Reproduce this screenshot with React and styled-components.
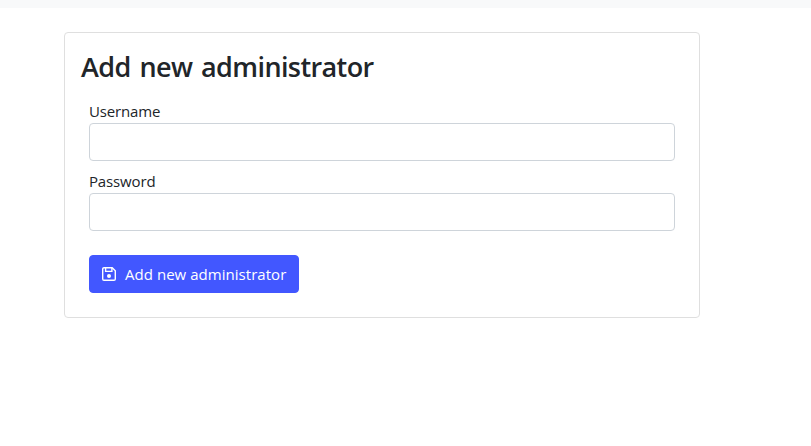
import React from "react";
import styled, { createGlobalStyle } from "styled-components";

const GlobalStyle = createGlobalStyle`
  *, *::before, *::after { box-sizing: border-box; }
  body {
    margin: 0;
    background: #fff;
    color: #212529;
    font-family: "Segoe UI", "Open Sans", "Noto Sans", sans-serif;
    font-size: 15px;
    line-height: 24px;
  }
`;

const Navbar = styled.header`
  height: 8px;
  background: #f8f9fa;
`;

const Card = styled.main`
  width: 636px;
  height: 286px;
  margin: 24px 0 0 64px;
  padding: 17px 16px 16px;
  border: 1px solid #dfdfdf;
  border-radius: 4px;
`;

const Title = styled.h1`
  margin: 0 0 7px;
  font-size: 27px;
  font-weight: 550;
  line-height: 34px;
  letter-spacing: -0.6px;
  word-spacing: 2.3px;
  white-space: nowrap;
`;

const Form = styled.form`
  display: flex;
  flex-direction: column;
  align-items: flex-start;
  gap: 8px;
  padding: 8px;
`;

const Field = styled.label`
  display: flex;
  flex-direction: column;
  width: 100%;
`;

const FieldName = styled.span`
  height: 24px;
  letter-spacing: -0.15px;
`;

const Input = styled.input`
  width: 100%;
  height: 38px;
  padding: 6px 12px;
  border: 1px solid #ced4da;
  border-radius: 4px;
  background: #fff;
  font: inherit;
  outline: none;
`;

const SubmitButton = styled.button`
  display: flex;
  align-items: center;
  gap: 9px;
  width: 210px;
  height: 38px;
  margin-top: 16px;
  padding: 0 12px;
  border: 1px solid #4257ff;
  border-radius: 4px;
  background: #4257ff;
  color: #fff;
  font: inherit;
  letter-spacing: 0.04px;
  white-space: nowrap;
`;

const IconSvg = styled.svg`
  flex: none;
  width: 14px;
  height: 16px;
`;

function SaveIcon() {
  return (
    <IconSvg viewBox="0 0 14 16" fill="none" stroke="#fff" strokeWidth="1.4" aria-hidden="true">
      <path d="M2 1.7h8.2l3.1 3.1V13a1.3 1.3 0 0 1-1.3 1.3H2A1.3 1.3 0 0 1 .7 13V3A1.3 1.3 0 0 1 2 1.7Z" />
      <path d="M3.6 2v3.4h6.3V2" />
      <circle cx="7" cy="9.9" r="2" fill="#fff" stroke="none" />
    </IconSvg>
  );
}

export default function App() {
  return (
    <>
      <GlobalStyle />
      <Navbar />
      <Card>
        <Title>Add new administrator</Title>
        <Form onSubmit={(event) => event.preventDefault()}>
          <Field>
            <FieldName>Username</FieldName>
            <Input type="text" />
          </Field>
          <Field>
            <FieldName>Password</FieldName>
            <Input type="password" />
          </Field>
          <SubmitButton type="submit">
            <SaveIcon />
            <span>Add new administrator</span>
          </SubmitButton>
        </Form>
      </Card>
    </>
  );
}
